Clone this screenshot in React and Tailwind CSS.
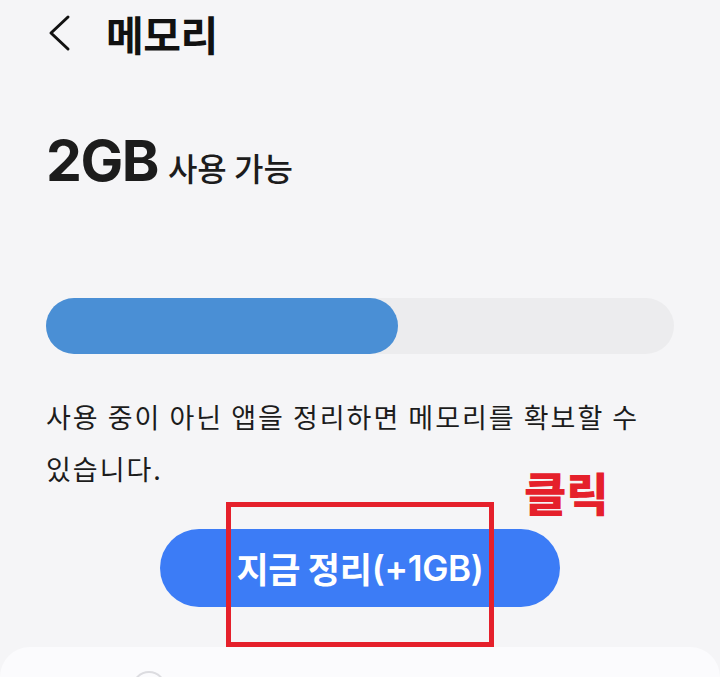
export default function App() {
  const font = { fontFamily: '"Noto Sans CJK KR", sans-serif' };
  return (
    <div
      className="relative flex h-[677px] w-[720px] flex-col overflow-hidden bg-[#f5f5f7] font-['Inter','Noto_Sans_CJK_KR',sans-serif] text-[#111]"
    >
      <header className="flex h-[66px] items-center pl-[48px]">
        <svg width="24" height="38" viewBox="0 0 24 38" className="shrink-0">
          <polyline points="20,3 3,19 20,35" fill="none" stroke="#111" strokeWidth="3" strokeLinecap="round" strokeLinejoin="round" />
        </svg>
        <h1 className="ml-[34px] text-[41px] font-bold leading-none tracking-[-0.5px]" style={font}>
          메모리
        </h1>
      </header>

      <div className="mt-[66px] flex items-baseline pl-[46px]">
        <span className="text-[57px] font-bold leading-none tracking-[-1.5px] text-[#1c1c1c]">2GB</span>
        <span className="ml-[10px] text-[32px] font-medium leading-none text-[#1c1c1c]" style={font}>
          사용 가능
        </span>
      </div>

      <div className="mx-[46px] mt-[109px] h-[56px] rounded-full bg-[#ececee]">
        <div className="h-full w-[352px] rounded-full bg-[#4a8fd5]" />
      </div>

      <p className="mt-[37px] break-keep pl-[46px] pr-[30px] text-[27px] leading-[52px] tracking-[2px] text-[#1c1c1c]" style={font}>
        사용 중이 아닌 앱을 정리하면 메모리를 확보할 수 있습니다.
      </p>

      <div className="mt-[34px] flex justify-center">
        <button className="flex h-[78px] w-[400px] items-center justify-center rounded-full bg-[#3c7cf6] text-[35px] font-semibold tracking-[-0.3px] text-white">
          <span style={font}>지금 정리</span>
          <span>(+1GB)</span>
        </button>
      </div>

      <div className="relative mt-[40px] flex-1 rounded-t-[40px] bg-[#fbfbfd]">
        <div className="absolute left-[132px] top-[24px] h-[34px] w-[34px] rounded-full border-2 border-[#dcdce0]" />
      </div>

      <div className="absolute left-[226px] top-[502px] h-[145px] w-[268px] border-[5px] border-[#e5202b]" />
      <span
        className="absolute left-[524px] top-[468px] text-[46px] font-black leading-none text-[#e5202b]"
        style={font}
      >
        클릭
      </span>
    </div>
  );
}
